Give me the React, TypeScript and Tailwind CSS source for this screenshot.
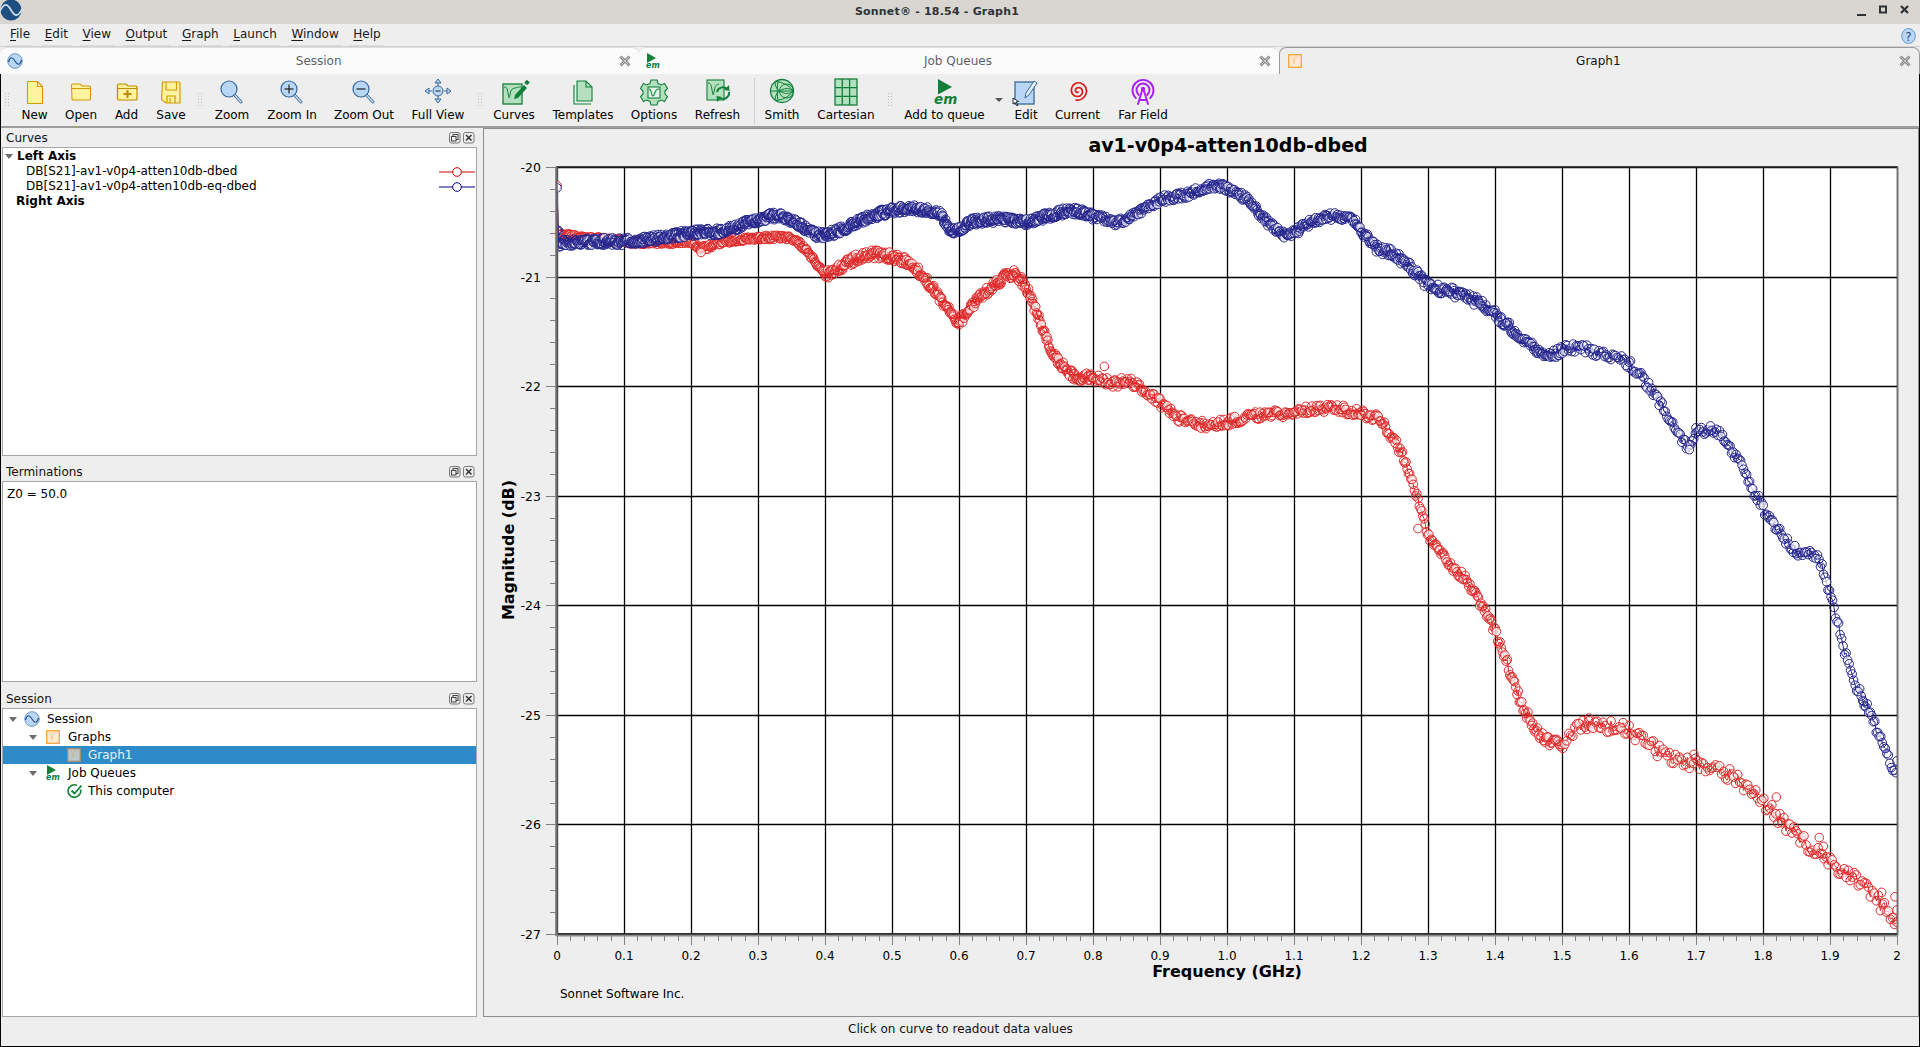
import React from "react";

const RED: [number, number][] = [[0,-20.62],[.05,-20.65],[.1,-20.68],[.15,-20.69],[.2,-20.68],[.215,-20.74],[.25,-20.68],[.3,-20.65],[.35,-20.65],[.375,-20.78],[.4,-20.97],[.42,-20.92],[.46,-20.8],[.5,-20.82],[.53,-20.9],[.56,-21.1],[.59,-21.33],[.6,-21.4],[.63,-21.2],[.66,-21.05],[.68,-20.98],[.7,-21.1],[.72,-21.4],[.74,-21.7],[.77,-21.9],[.8,-21.92],[.83,-21.97],[.86,-21.97],[.9,-22.15],[.93,-22.3],[.97,-22.35],[1,-22.33],[1.03,-22.28],[1.08,-22.25],[1.15,-22.2],[1.2,-22.25],[1.23,-22.33],[1.26,-22.6],[1.28,-22.95],[1.3,-23.35],[1.33,-23.6],[1.36,-23.8],[1.39,-24.1],[1.41,-24.4],[1.44,-24.9],[1.47,-25.2],[1.5,-25.25],[1.53,-25.1],[1.56,-25.1],[1.6,-25.15],[1.65,-25.35],[1.7,-25.45],[1.75,-25.55],[1.8,-25.8],[1.85,-26.1],[1.9,-26.35],[1.95,-26.55],[2,-26.88]];
const BLUE: [number, number][] = [[0,-20.7],[.05,-20.68],[.1,-20.68],[.15,-20.65],[.2,-20.6],[.25,-20.58],[.3,-20.48],[.33,-20.45],[.36,-20.52],[.39,-20.62],[.42,-20.58],[.46,-20.47],[.5,-20.4],[.53,-20.38],[.57,-20.42],[.59,-20.58],[.62,-20.5],[.66,-20.48],[.7,-20.5],[.73,-20.45],[.77,-20.4],[.8,-20.45],[.84,-20.5],[.87,-20.4],[.9,-20.3],[.94,-20.25],[.98,-20.17],[1,-20.2],[1.03,-20.3],[1.06,-20.5],[1.09,-20.62],[1.12,-20.52],[1.16,-20.45],[1.19,-20.5],[1.22,-20.72],[1.25,-20.8],[1.27,-20.9],[1.3,-21.08],[1.34,-21.15],[1.38,-21.25],[1.41,-21.4],[1.45,-21.6],[1.48,-21.72],[1.51,-21.65],[1.56,-21.7],[1.6,-21.8],[1.63,-22],[1.66,-22.3],[1.69,-22.55],[1.7,-22.42],[1.73,-22.42],[1.76,-22.65],[1.79,-23],[1.82,-23.3],[1.85,-23.5],[1.88,-23.55],[1.9,-23.9],[1.93,-24.6],[1.96,-25],[2,-25.55]];

const px = (f: number) => 557 + f * 670;
const py = (db: number) => 167 + (-20 - db) * 109.57;
const snap = (v: number) => Math.round(v) + 0.5;

function interp(tbl: [number, number][], f: number) {
  for (let i = 0; i < tbl.length - 1; i++) {
    if (f <= tbl[i + 1][0]) {
      const t = (f - tbl[i][0]) / (tbl[i + 1][0] - tbl[i][0]);
      const p0 = tbl[Math.max(i - 1, 0)][1], p1 = tbl[i][1], p2 = tbl[i + 1][1], p3 = tbl[Math.min(i + 2, tbl.length - 1)][1];
      return 0.5 * (2 * p1 + (p2 - p0) * t + (2 * p0 - 5 * p1 + 4 * p2 - p3) * t * t + (3 * p1 - p0 - 3 * p2 + p3) * t * t * t);
    }
  }
  return tbl[tbl.length - 1][1];
}

function series(tbl: [number, number][], seed: number, amp: (f: number) => number, start: number, extra: [number, number][], stepScale: number) {
  let s = seed;
  const rnd = () => {
    s = (s * 16807) % 2147483647;
    return s / 2147483647;
  };
  const out: [number, number][] = [[px(0), py(start)], [px(0.002), py(-20.58)]];
  let f = 0.003;
  while (f <= 2) {
    const n = (rnd() - 0.5) * 2 * amp(f);
    out.push([px(f), py(interp(tbl, f) + n)]);
    f += (f < 0.8 ? 0.0012 : f < 1.5 ? 0.0018 : 0.003) * stepScale;
  }
  extra.forEach((e) => out.push([px(e[0]), py(e[1])]));
  return out;
}

const redPts = series(RED, 4711, (f) => (f < 0.4 ? 0.02 : f < 1.5 ? 0.04 : 0.06), -20.17, [[.682,-20.94],[.817,-21.82],[.215,-20.78],[.6,-21.44],[1.697,-25.36],[1.82,-25.75],[1.884,-26.12],[1.89,-26.2],[1.977,-26.62],[1.285,-23.3],[.47,-20.76],[.66,-21.06],[1.54,-25.03],[2,-26.78],[1.997,-26.66]], 1);
const bluePts = series(BLUE, 9127, (f) => (f < 1.2 ? 0.034 : 0.042), -20.19, [[.59,-20.6],[.4,-20.6],[1.69,-22.58],[1.7,-22.38],[2,-25.42],[1.95,-24.88],[.21,-20.62],[0,-20.58]], 0.75);

function Curve({ pts, color }: { pts: [number, number][]; color: string }) {
  return (
    <g>
      <polyline points={pts.slice(0, -15).map((p) => p.join(",")).join(" ")} fill="none" stroke={color} strokeWidth="1" />
      {pts.map((p, i) => (
        <circle key={i} cx={p[0]} cy={p[1]} r="4.300" fill="#fff" fillOpacity={i % 7 === 0 ? 0.7 : 0} stroke={color} strokeWidth="1" />
      ))}
    </g>
  );
}

const fxLabels = Array.from({ length: 21 }, (_, i) => i);
const dbMajor = [20, 21, 22, 23, 24, 25, 26, 27];

function Chart() {
  const xMinor = Array.from({ length: 101 }, (_, i) => i).filter((i) => i % 5 !== 0);
  const yMinor = Array.from({ length: 36 }, (_, i) => i).filter((i) => i % 5 !== 0);
  return (
    <svg width="1433" height="886" viewBox="484 129 1433 886" className="block font-['DejaVu_Sans',sans-serif]">
      <defs>
        <clipPath id="plotclip">
          <rect x="557" y="167" width="1340" height="767" />
        </clipPath>
      </defs>
      <text x="1228" y="152" textAnchor="middle" fontSize="19" fontWeight="700" fill="#000">av1-v0p4-atten10db-dbed</text>
      <rect x="557" y="167" width="1340" height="767" fill="#fff" />
      {fxLabels.map((i) => (
        <line key={i} x1={snap(px(i / 10))} x2={snap(px(i / 10))} y1="167" y2="934" stroke="#000" strokeWidth="1.300" />
      ))}
      {dbMajor.map((d) => (
        <line key={d} x1="557" x2="1897" y1={snap(py(-d))} y2={snap(py(-d))} stroke="#000" strokeWidth="1.300" />
      ))}
      <g clipPath="url(#plotclip)">
        <Curve pts={redPts} color="#e02a2a" />
        <Curve pts={bluePts} color="#26268e" />
      </g>
      <line x1="556" x2="1898" y1="167" y2="167" stroke="#222" strokeWidth="1.500" />
      <line x1="556" x2="1898" y1="934" y2="934" stroke="#000" strokeWidth="1.500" />
      <line x1="556.500" x2="556.500" y1="167" y2="936" stroke="#6e6e6e" strokeWidth="2.500" />
      <line x1="1897.500" x2="1897.500" y1="167" y2="936" stroke="#6e6e6e" strokeWidth="1.500" />
      <line x1="556" x2="1898" y1="935.500" y2="935.500" stroke="#8a8a8a" strokeWidth="2" />
      {dbMajor.map((d) => (
        <g key={d}>
          <line x1="546" x2="556" y1={snap(py(-d))} y2={snap(py(-d))} stroke="#808080" />
          <text x="541" y={py(-d) + 5} textAnchor="end" fontSize="12.500" fill="#000">-{d}</text>
        </g>
      ))}
      {yMinor.map((i) => (
        <line key={i} x1="550" x2="556" y1={snap(py(-20 - i * 0.2))} y2={snap(py(-20 - i * 0.2))} stroke="#808080" />
      ))}
      {fxLabels.map((i) => (
        <g key={i}>
          <line x1={snap(px(i / 10))} x2={snap(px(i / 10))} y1="936" y2="945" stroke="#808080" />
          <text x={px(i / 10)} y="960" textAnchor="middle" fontSize="12" fill="#000">
            {i === 0 ? "0" : i === 20 ? "2" : (i / 10).toFixed(1)}
          </text>
        </g>
      ))}
      {xMinor.map((i) => (
        <line key={i} x1={snap(px(i * 0.02))} x2={snap(px(i * 0.02))} y1="936" y2="941" stroke="#808080" />
      ))}
      <text x="1227" y="977" textAnchor="middle" fontSize="16" fontWeight="700" fill="#000">Frequency (GHz)</text>
      <text transform="translate(514 550) rotate(-90)" textAnchor="middle" fontSize="16" fontWeight="700" fill="#000">Magnitude (dB)</text>
      <text x="560" y="998" fontSize="12" fill="#000">Sonnet Software Inc.</text>
    </svg>
  );
}

const Y = { s: "#d49a00", f: "#fff3a0" };
const G = { s: "#12803a", f: "#b5e0bf" };
const B = { s: "#36689c", f: "#b9d6f6" };

function Mag({ kind }: { kind?: "in" | "out" }) {
  return (
    <g>
      <line x1="18.500" y1="17" x2="25" y2="24" stroke={B.s} strokeWidth="3" strokeLinecap="round" />
      <line x1="18.500" y1="17" x2="25" y2="24" stroke="#d8e6f5" strokeWidth="1.200" strokeLinecap="round" />
      <circle cx="13" cy="11" r="8" fill={B.f} stroke={B.s} strokeWidth="1.200" />
      {kind && <line x1="8.500" x2="17.500" y1="11" y2="11" stroke="#222" strokeWidth="1.200" />}
      {kind === "in" && <line x1="13" x2="13" y1="6.500" y2="15.500" stroke="#222" strokeWidth="1.200" />}
    </g>
  );
}

const Em = ({ x, y, size }: { x: number; y: number; size: number }) => (
  <text x={x} y={y} fontSize={size} fontStyle="italic" fontWeight="700" fill="#12803a" fontFamily="'DejaVu Sans',sans-serif">em</text>
);

function Icon({ name }: { name: string }) {
  const body = (() => {
    switch (name) {
      case "New":
        return <path d="M8.500 3.500h10l5 5v17h-15z M18.500 3.500v5h5" fill={Y.f} stroke={Y.s} strokeWidth="1.100" strokeLinejoin="round" />;
      case "Open":
        return <path d="M6.500 7.500c0-1 .5-1.500 1.500-1.500h7l2 2h7.500c.7 0 1 .5 1 1v12c0 .7-.4 1-1 1h-16.500c-.7 0-1-.4-1-1z M6.500 10.500h19.500" fill={Y.f} stroke={Y.s} strokeWidth="1.100" />;
      case "Add":
        return (
          <g>
            <path d="M6.500 7.500c0-1 .5-1.500 1.500-1.500h7l2 2h8c.7 0 1 .5 1 1v12c0 .7-.4 1-1 1h-17.500c-.7 0-1-.4-1-1z M6.500 10.500h20" fill={Y.f} stroke="#c08a00" strokeWidth="1.200" />
            <path d="M16.500 12v8M12.500 16h8" stroke="#c08a00" strokeWidth="2" />
          </g>
        );
      case "Save":
        return (
          <g fill="none" stroke={Y.s} strokeWidth="1.200">
            <path d="M7.500 4h16.500c.7 0 1 .3 1 1v20h-14l-4.500-3.500z" fill={Y.f} />
            <path d="M11 4v8h10.500v-8M12 25v-7h8v7M15 20v5" />
          </g>
        );
      case "Zoom":
        return <Mag />;
      case "Zoom In":
        return <Mag kind="in" />;
      case "Zoom Out":
        return <Mag kind="out" />;
      case "Full View":
        return (
          <g fill={B.f} stroke={B.s} strokeWidth="1">
            <path d="M16 1l-3 4h6zM16 25l-3-4h6zM3 13l4-3v6zM29 13l-4-3v6z" />
            <path d="M16 5v3M16 18v3M7 13h3M22 13h3" fill="none" />
            <circle cx="16" cy="13" r="5" />
            <path d="M13.500 13h5" stroke="#222" />
          </g>
        );
      case "Curves":
        return (
          <g>
            <rect x="5" y="6" width="19" height="20" fill={G.f} stroke={G.s} strokeWidth="1.300" />
            <path d="M6 9c3 0 3 1 4 6s1 7 2 2 1-6 5-7 4-1 6-1" fill="none" stroke={G.s} strokeWidth="1" />
            <path d="M16 21l1-4L26 7l3 3-9 10z" fill={G.s} />
            <rect x="27" y="2.500" width="4" height="4" transform="rotate(45 29 4.500)" fill={G.s} />
          </g>
        );
      case "Templates":
        return (
          <g stroke={G.s} strokeWidth="1.100">
            <path d="M7 7v19h17" fill="none" />
            <path d="M10 3h9l6 6v14h-15z" fill={G.f} />
            <path d="M19 3v6h6" fill="none" />
          </g>
        );
      case "Options":
        return (
          <g stroke={G.s} strokeWidth="1.100">
            <path d="M13 2h6l1 3.500 3.500 1.500 3-1.500 3 5-2.500 2.500v3l2.500 2.500-3 5-3-1.500-3.500 1.500-1 3.500h-6l-1-3.500-3.500-1.500-3 1.500-3-5 2.500-2.500v-3l-2.500-2.500 3-5 3 1.500 3.500-1.500z" fill={G.f} />
            <rect x="10" y="9" width="12" height="11" fill="#e4f4e8" />
            <path d="M11 11c3 0 2 7 4 7s1-7 6-7" fill="none" />
          </g>
        );
      case "Refresh":
        return (
          <g>
            <rect x="5" y="2" width="17" height="20" fill={G.f} stroke={G.s} strokeWidth="1.100" />
            <path d="M6 5c3 0 3 2 4 7s1 7 2 2 1-7 5-8" fill="none" stroke={G.s} />
            <path d="M15 14a6 6 0 0 1 10-3M27 14a6 6 0 0 1-9 6" fill="none" stroke={G.s} strokeWidth="2" />
            <path d="M27 7l.5 6-5.500-1zM15 24l-.500-6 5.500 1z" fill={G.s} />
          </g>
        );
      case "Smith":
        return (
          <g fill="none" stroke={G.s} strokeWidth="1">
            <circle cx="16" cy="13" r="11.500" fill={G.f} strokeWidth="1.300" />
            <path d="M4.500 13h23M27.500 13A11.500 11.500 0 0 1 9 4M27.500 13A11.500 11.500 0 0 0 9 22M27.500 13c-6-7-12-9-18-9.500M27.500 13c-6 7-12 9-18 9.500M27.500 13a7 7 0 0 0-14 0 7 7 0 0 0 14 0M12 3c-1 6-1 14 0 20" />
          </g>
        );
      case "Cartesian":
        return (
          <g fill={G.f} stroke={G.s} strokeWidth="1.300">
            <rect x="5" y="1" width="22" height="26" />
            <path d="M12.300 1v26M19.600 1v26M5 9.700h22M5 18.300h22" fill="none" />
          </g>
        );
      case "Add to queue":
        return (
          <g>
            <path d="M9 1l14 8-14 7.500z" fill="#12803a" />
            <Em x={5} y={26} size={13.500} />
          </g>
        );
      case "Edit":
        return (
          <g>
            <rect x="5" y="4" width="19" height="22" fill={B.f} stroke={B.s} strokeWidth="1.300" />
            <path d="M15 20l1-5 8-12 3 2-8 12z" fill="#e8f1fb" stroke={B.s} strokeWidth="1" />
            <path d="M3 20v6l2-1.500 2 3.500 1-.5-2-3.500 2.500-.5z" fill="#fff" stroke="#000" strokeWidth=".8" />
          </g>
        );
      case "Current":
        return (
          <path d="M16 14c-1.500 1-3-.5-2.500-2.500 1-2.500 5-2.500 6.500 0 1.500 3-.5 7-4.500 7s-7-3.500-6-8c1-4.500 5-6.500 9-5.500 5 1.500 7 6.500 5.500 11-1.500 4-5.500 7-10 6" fill="none" stroke="#e01616" strokeWidth="1.700" strokeLinecap="round" />
        );
      case "Far Field":
        return (
          <g fill="none" stroke="#a820f0" strokeWidth="1.900" strokeLinecap="round">
            <path d="M8.800 20a10.500 10.500 0 1 1 14.400 0" />
            <path d="M11.800 17a6.500 6.500 0 1 1 8.400 0" />
            <circle cx="16" cy="11" r="2.200" fill="#a820f0" stroke="none" />
            <path d="M15 13l-4 13M17 13l4 13M12.500 22h7" />
          </g>
        );
    }
    return null;
  })();
  return (
    <svg width="32" height="28" viewBox="0 0 32 28" className="block">
      {body}
    </svg>
  );
}

const Grip = () => (
  <span className="flex h-full w-full items-center justify-center">
    <span className="grid grid-cols-2 gap-x-[2px] gap-y-[2px] opacity-60">
      {Array.from({ length: 10 }, (_, i) => (
        <i key={i} className="block h-[1px] w-[1px] bg-[#9a9a9a]" />
      ))}
    </span>
  </span>
);

function Tool({ name, w }: { name: string; w: string }) {
  return (
    <div className={`flex shrink-0 flex-col items-center ${w}`}>
      <div className="flex h-[28px] items-center justify-center">
        <Icon name={name} />
      </div>
      <div className="mt-[1px] whitespace-nowrap text-[12px] leading-[16px] text-black">{name}</div>
    </div>
  );
}

const Tab = ({ label, active, icon }: { label: string; active?: boolean; icon: React.ReactNode }) => (
  <div
    className={`flex h-[27px] flex-1 items-center rounded-t-[7px] pl-[5px] pr-[5px] ${
      active ? "border border-b-0 border-[#9a9a9a] bg-[#eeeeee] text-[#10151a]" : "border-t border-[#dedede] bg-[#fbfbfb] text-[#5b626a]"
    }`}
  >
    <span className="flex w-[20px] justify-center">{icon}</span>
    <span className="flex-1 pr-[6px] text-center text-[12px]">{label}</span>
    <svg width="14" height="14" viewBox="0 0 14 14" className="mr-[2px]">
      <path d="M2.500 2.500l9 9M11.500 2.500l-9 9" stroke="#8a8a8a" strokeWidth="3" />
      <path d="M2.500 2.500l9 9M11.500 2.500l-9 9" stroke="#c8c8c8" strokeWidth="1" />
    </svg>
  </div>
);

const WaveIcon = ({ size = 16 }: { size?: number }) => (
  <svg width={size} height={size} viewBox="0 0 16 16" className="block">
    <circle cx="8" cy="8" r="7.300" fill="#b9d6f6" stroke="#6d97c4" />
    <path d="M1.500 9C3 3.500 5.500 3.500 8 8s5 4.500 6.500-1" fill="none" stroke="#1f4e80" strokeWidth="1.100" />
  </svg>
);

const EmIcon = () => (
  <svg width="16" height="16" viewBox="0 0 16 16" className="block">
    <path d="M1 0l9 5-9 5z" fill="#12803a" />
    <Em x={0} y={15} size={8} />
  </svg>
);

const GraphIcon = ({ dim }: { dim?: boolean }) => (
  <svg width="14" height="14" viewBox="0 0 14 14" className="block">
    <rect x=".7" y=".7" width="12.600" height="12.600" fill={dim ? "#bcc8cc" : "#fdebd2"} stroke={dim ? "#a8906c" : "#f6a33c"} strokeWidth="1.300" />
    <path d="M3 3h1.500c1 0 .7 7 1.500 7s.5-7 1.500-7H11" fill="none" stroke={dim ? "#c8b89c" : "#f9cf9c"} strokeWidth="1.200" />
  </svg>
);

const Arrow = () => (
  <svg width="8" height="5" viewBox="0 0 8 5" className="block">
    <path d="M0 0h8L4 5z" fill="#6c6c6c" />
  </svg>
);

function DockTitle({ title, h }: { title: string; h: string }) {
  return (
    <div className={`flex items-center pl-[4px] pr-[2px] ${h}`}>
      <span className="flex-1 text-[12px] text-[#111]">{title}</span>
      <svg width="26" height="12" viewBox="0 0 26 12">
        <rect x=".5" y=".5" width="10.500" height="10.500" rx="2" fill="#eee" stroke="#777" />
        <rect x="4" y="2.500" width="5" height="5" fill="none" stroke="#444" />
        <rect x="2.500" y="4.500" width="4.500" height="4.500" fill="#eee" stroke="#444" />
        <rect x="14.500" y=".5" width="10.500" height="10.500" rx="2" fill="#eee" stroke="#777" />
        <path d="M17 3l5.500 5.500M22.500 3L17 8.500" stroke="#333" strokeWidth="1.500" />
      </svg>
    </div>
  );
}

const Legend = ({ color }: { color: string }) => (
  <svg width="36" height="10" viewBox="0 0 36 10" className="block">
    <path d="M0 5h36" stroke={color} />
    <circle cx="18" cy="5" r="4.300" fill="#fff" stroke={color} />
  </svg>
);

const U = ({ l, r }: { l: string; r: string }) => (
  <span className="border-b border-[#dcdcdc] px-[3px] pb-[2px] text-[12px] leading-[17px] text-[#16191d]">
    <span className="underline underline-offset-2">{l}</span>
    {r}
  </span>
);

const tools: [string, string][] = [
  ["|", "w-[12px]"],
  ["New", "w-[43px]"],
  ["Open", "w-[50px]"],
  ["Add", "w-[41px]"],
  ["Save", "w-[48px]"],
  ["|", "w-[10px]"],
  ["Zoom", "w-[54px]"],
  ["Zoom In", "w-[66px]"],
  ["Zoom Out", "w-[78px]"],
  ["Full View", "w-[70px]"],
  ["|", "w-[14px]"],
  ["Curves", "w-[54px]"],
  ["Templates", "w-[84px]"],
  ["Options", "w-[58px]"],
  ["Refresh", "w-[69px]"],
  ["/", "w-[4px]"],
  ["Smith", "w-[52px]"],
  ["Cartesian", "w-[76px]"],
  ["|", "w-[12px]"],
  ["Add to queue", "w-[97px]"],
  ["v", "w-[12px]"],
  ["Edit", "w-[42px]"],
  ["Current", "w-[61px]"],
  ["Far Field", "w-[70px]"],
];

export default function App() {
  return (
    <div className="flex h-[1047px] w-[1920px] flex-col overflow-hidden bg-[#eeeeee] font-['DejaVu_Sans',sans-serif] text-black">
      <div className="relative flex h-[24px] shrink-0 items-center justify-center bg-[#d9d5d1] pr-[46px]">
        <svg width="22" height="22" viewBox="0 0 22 22" className="absolute left-0 top-0">
          <circle cx="11" cy="10" r="10.500" fill="#1f4e80" />
          <path d="M0 11C4 3 7 3 11 10s7 7 11-1" fill="none" stroke="#cfe0f2" strokeWidth="1.600" />
        </svg>
        <span className="text-[11px] font-bold tracking-[0.2px] text-[#2e3436]">Sonnet® - 18.54 - Graph1</span>
        <svg width="70" height="16" viewBox="0 0 70 16" className="absolute right-[1px] top-[3px]">
          <path d="M8 12h9" stroke="#2e3436" strokeWidth="2" />
          <rect x="31" y="3.500" width="6" height="6" fill="none" stroke="#2e3436" strokeWidth="2" />
          <path d="M52 3l7 7M59 3l-7 7" stroke="#2e3436" strokeWidth="2.200" />
        </svg>
      </div>

      <div className="flex h-[22px] shrink-0 items-center gap-[8.600px] pl-[7px] pr-[4px] pt-[1px]">
        <U l="F" r="ile" />
        <U l="E" r="dit" />
        <U l="V" r="iew" />
        <U l="O" r="utput" />
        <U l="G" r="raph" />
        <U l="L" r="aunch" />
        <U l="W" r="indow" />
        <U l="H" r="elp" />
        <svg width="15" height="16" viewBox="0 0 15 16" className="ml-auto">
          <ellipse cx="7.500" cy="8" rx="6.800" ry="7.500" fill="#b9d6f6" stroke="#6d97c4" />
          <text x="7.500" y="12.500" textAnchor="middle" fontSize="12" fill="#1f4e80">?</text>
        </svg>
      </div>

      <div className="flex h-[28px] shrink-0 border-t border-[#d2d2d2]">
        <Tab label="Session" icon={<WaveIcon />} />
        <Tab label="Job Queues" icon={<EmIcon />} />
        <Tab label="Graph1" active icon={<GraphIcon />} />
      </div>

      <div className="flex min-h-0 flex-1 flex-col border-x border-b border-black">
        <div className="flex h-[54px] shrink-0 items-start border-b-2 border-[#9c9c9c] pt-[4px]">
          {tools.map(([n, w], i) =>
            n === "|" ? (
              <div key={i} className={`h-[42px] shrink-0 ${w}`}>
                <Grip />
              </div>
            ) : n === "/" ? (
              <div key={i} className={`flex h-[46px] shrink-0 justify-center ${w}`}>
                <div className="h-full w-[1px] bg-[#d0d0d0]" />
              </div>
            ) : n === "v" ? (
              <div key={i} className={`flex h-[24px] shrink-0 items-end justify-center ${w}`}>
                <div className="h-0 w-0 border-x-[4px] border-t-[4px] border-x-transparent border-t-[#555]" />
              </div>
            ) : (
              <Tool key={i} name={n} w={w} />
            ),
          )}
        </div>

        <div className="flex min-h-0 flex-1">
          <div className="flex w-[482px] shrink-0 flex-col pl-[1px] pr-[6px]">
            <DockTitle title="Curves" h="h-[19px]" />
            <div className="h-[309px] border border-[#a6a6a6] bg-white text-[12px] leading-[15px]">
              <div className="flex h-[16px] items-center pl-[2px] pt-[1px] font-bold">
                <span className="mr-[4px]"><Arrow /></span>
                Left Axis
              </div>
              <div className="flex h-[15px] items-center pl-[23px] pr-[1px]">
                <span className="flex-1">DB[S21]-av1-v0p4-atten10db-dbed</span>
                <Legend color="#d00000" />
              </div>
              <div className="flex h-[15px] items-center pl-[23px] pr-[1px]">
                <span className="flex-1">DB[S21]-av1-v0p4-atten10db-eq-dbed</span>
                <Legend color="#000080" />
              </div>
              <div className="flex h-[15px] items-center pl-[13px] font-bold">Right Axis</div>
            </div>
            <DockTitle title="Terminations" h="mt-[5px] h-[20px] pt-[1px]" />
            <div className="h-[201px] border border-[#a6a6a6] bg-white pl-[4px] pt-[5px] text-[12px] leading-[15px]">Z0 = 50.0</div>
            <DockTitle title="Session" h="mt-[6px] h-[20px] pt-[1px]" />
            <div className="min-h-0 flex-1 border border-[#a6a6a6] bg-white pt-[1px] text-[12px]">
              <div className="flex h-[18px] items-center pl-[6px]">
                <Arrow />
                <span className="ml-[7px] mr-[7px]"><WaveIcon /></span>
                Session
              </div>
              <div className="flex h-[18px] items-center pl-[26px]">
                <Arrow />
                <span className="ml-[9px] mr-[8px]"><GraphIcon /></span>
                Graphs
              </div>
              <div className="flex h-[18px] items-center bg-[#2f8ac8] pl-[64px] text-[#e8f2fa]">
                <span className="mr-[7px]"><GraphIcon dim /></span>
                Graph1
              </div>
              <div className="flex h-[18px] items-center pl-[26px]">
                <Arrow />
                <span className="ml-[9px] mr-[6px]"><EmIcon /></span>
                Job Queues
              </div>
              <div className="flex h-[18px] items-center pl-[64px]">
                <svg width="16" height="16" viewBox="0 0 16 16" className="mr-[5px] block">
                  <path d="M13.500 6.500A6.300 6.300 0 1 1 10 2.300" fill="none" stroke="#12803a" strokeWidth="1.600" />
                  <path d="M4.500 7.500l3 3 7-8" fill="none" stroke="#12803a" strokeWidth="1.800" />
                </svg>
                This computer
              </div>
            </div>
          </div>

          <div className="min-w-0 flex-1 border border-[#8e8e8e]">
            <Chart />
          </div>
        </div>

        <div className="flex h-[29px] shrink-0 items-center pb-[6px] pl-[847px] text-[12px] text-[#111]">Click on curve to readout data values</div>
      </div>
    </div>
  );
}
